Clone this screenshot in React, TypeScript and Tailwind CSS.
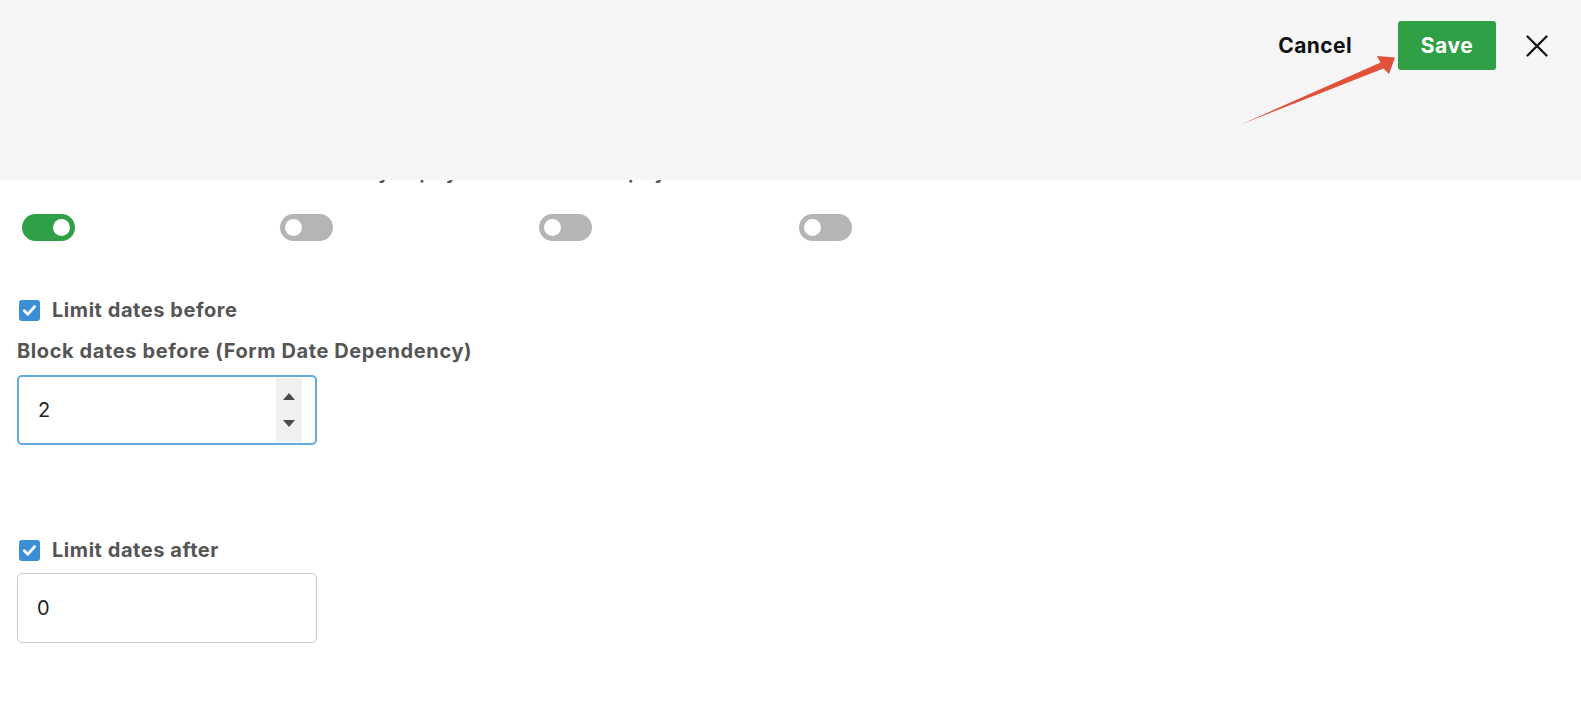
import React from "react";

function Toggle({ on }: { on: boolean }) {
  return (
    <div
      className={`flex h-[27px] w-[53px] items-center rounded-full px-[5px] ${
        on ? "justify-end bg-[#30a046]" : "justify-start bg-[#b5b5b5]"
      }`}
    >
      <div className="h-[17px] w-[17px] rounded-full bg-white" />
    </div>
  );
}

function Checkbox() {
  return (
    <div className="flex h-[21px] w-[21px] items-center justify-center rounded-[3px] bg-[#3b8fd9]">
      <svg width="15" height="15" viewBox="0 0 15 15" fill="none">
        <path d="M2.3 7.8 L5.8 11.2 L12.6 3.6" stroke="white" strokeWidth="2.8" strokeLinecap="round" strokeLinejoin="round" />
      </svg>
    </div>
  );
}

export default function App() {
  return (
    <div
      className="relative h-[706px] w-full overflow-hidden bg-white"
      style={{ fontFamily: "Inter, 'Liberation Sans', sans-serif" }}
    >
      {/* content (scrolled under the header) */}
      <div className="pl-[17px] pt-[161px]">
        <div className="grid grid-cols-[263px_260px_260px_260px] pl-[5px] text-[18px] font-bold leading-[24px] text-[#555]">
          <span>Enabled</span>
          <span>Current day display</span>
          <span>Never display</span>
          <span>Hidden</span>
        </div>
        <div className="mt-[29px] grid grid-cols-[258px_259px_260px_260px] pl-[5px]">
          <Toggle on />
          <Toggle on={false} />
          <Toggle on={false} />
          <Toggle on={false} />
        </div>

        <div className="mt-[57px] flex h-[24px] items-center gap-[12px] pl-[2px]">
          <Checkbox />
          <span className="text-[20px] font-bold leading-[24px] tracking-[0.55px] text-[#555]">Limit dates before</span>
        </div>
        <div className="mt-[17px] text-[20px] font-bold leading-[24px] tracking-[0.6px] text-[#555]">
          Block dates before (Form Date Dependency)
        </div>
        <div className="mt-[12px] flex h-[70px] w-[300px] items-center rounded-[5px] border-2 border-[#63a9e4] pl-[19px] pr-[13px]">
          <span className="flex-1 text-[20px] text-[#222]">2</span>
          <div className="flex h-[64px] w-[26px] flex-col items-center justify-center gap-[20px] bg-[#f0f0f0]">
            <svg width="12" height="7" viewBox="0 0 12 7">
              <path d="M0 7 L6 0 L12 7 Z" fill="#4a4a4a" />
            </svg>
            <svg width="12" height="7" viewBox="0 0 12 7">
              <path d="M0 0 L12 0 L6 7 Z" fill="#4a4a4a" />
            </svg>
          </div>
        </div>

        <div className="mt-[93px] flex h-[24px] items-center gap-[12px] pl-[2px]">
          <Checkbox />
          <span className="text-[20px] font-bold leading-[24px] tracking-[0.55px] text-[#555]">Limit dates after</span>
        </div>
        <div className="mt-[11px] flex h-[70px] w-[300px] items-center rounded-[5px] border-[1.5px] border-[#cbcbcb] pl-[19px]">
          <span className="text-[20px] text-[#222]">0</span>
        </div>
      </div>

      {/* header overlay */}
      <div className="absolute inset-x-0 top-0 z-10 h-[180px] bg-[#f6f6f6]">
        <div className="flex items-center justify-end pr-[32px] pt-[21px]">
          <button className="text-[21px] font-bold tracking-[0.4px] text-[#111]">Cancel</button>
          <button className="ml-[46px] flex h-[49px] w-[98px] items-center justify-center rounded-[3px] bg-[#30a046] text-[21px] font-bold tracking-[0.5px] text-white">
            Save
          </button>
          <button className="ml-[29px] flex h-[24px] w-[24px] items-center justify-center">
            <svg width="22" height="22" viewBox="0 0 22 22" fill="none">
              <path d="M1.5 1.5 L20.5 20.5 M20.5 1.5 L1.5 20.5" stroke="#111" strokeWidth="2.3" strokeLinecap="round" />
            </svg>
          </button>
        </div>
        {/* annotation arrow */}
        <svg className="pointer-events-none absolute left-0 top-0" width="1581" height="180">
          <polygon
            points="1241,124.5 1380.5,62.5 1377,56 1395,57.5 1389,74 1383.5,68.5"
            fill="#e4513b"
          />
        </svg>
      </div>
    </div>
  );
}
